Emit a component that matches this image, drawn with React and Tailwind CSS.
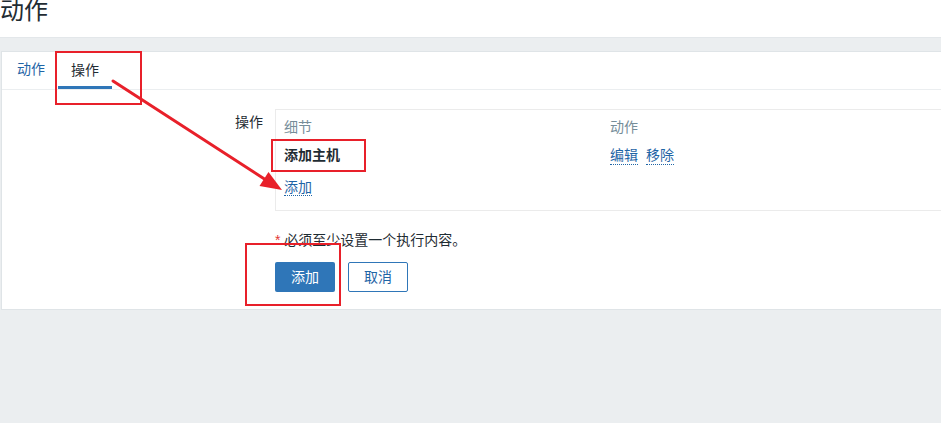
export default function App() {
  const font = { fontFamily: 'Arial, "Noto Sans CJK SC", sans-serif' };
  return (
    <div className="relative h-[423px] w-[941px] overflow-hidden bg-[#ebeef0] text-[14px] text-[#1f2c33]" style={font}>
      <header className="flex h-[38px] items-start bg-white border-b border-[#e3e7ea]">
        <h1 className="-mt-[4px] text-[24px] leading-[30px] font-normal text-[#1f2c33]">动作</h1>
      </header>

      <section className="mt-[13px] ml-[1px] h-[259px] border border-r-0 border-[#dfe4e7] bg-white">
        <nav className="flex h-[38px] border-b border-[#ebeef0] pl-[2px]">
          <a className="flex items-center px-[13px] border-b-[3px] border-transparent text-[#1f65a6]">动作</a>
          <a className="flex items-center px-[13px] border-b-[3px] border-[#2f76b8] pt-[3px] text-[#1f2c33]">操作</a>
        </nav>

        <div className="grid grid-cols-[258px_1fr] gap-x-[12px] pt-[19px] pl-[3px]">
          <div className="pt-[4px] text-right leading-[18px]">操作</div>
          <div className="h-[102px] border border-r-0 border-[#ebebeb] px-[8px] pt-[8px]">
            <div className="grid grid-cols-[326px_1fr] leading-[18px]">
              <span className="text-[#768d99]">细节</span>
              <span className="text-[#768d99]">动作</span>
            </div>
            <div className="mt-[10px] grid grid-cols-[326px_1fr] leading-[18px]">
              <span className="font-bold">添加主机</span>
              <span className="flex gap-[8px]">
                <a className="border-b border-dotted border-[#1f65a6] text-[#1f65a6]">编辑</a>
                <a className="border-b border-dotted border-[#1f65a6] text-[#1f65a6]">移除</a>
              </span>
            </div>
            <div className="mt-[13px] leading-[18px]">
              <a className="border-b border-dotted border-[#1f65a6] text-[#1f65a6]">添加</a>
            </div>
          </div>

          <div />
          <div className="mt-[20px] leading-[18px]">
            <span className="text-[#e33734]">*</span> 必须至少设置一个执行内容。
          </div>

          <div />
          <div className="mt-[13px] flex gap-[13px]">
            <button className="h-[30px] w-[60px] rounded-[2px] bg-[#2f76b8] text-white">添加</button>
            <button className="h-[30px] w-[60px] rounded-[2px] border border-[#2f76b8] bg-white text-[#1f65a6]">取消</button>
          </div>
        </div>
      </section>

      {/* annotations */}
      <div className="absolute left-[55px] top-[51px] h-[54px] w-[87px] border-2 border-[#e8202a]" />
      <div className="absolute left-[271px] top-[139px] h-[33px] w-[95px] border-2 border-[#e8202a]" />
      <div className="absolute left-[245px] top-[243px] h-[63px] w-[96px] border-2 border-[#e8202a]" />
      <svg className="absolute left-0 top-0" width="941" height="423">
        <line x1="113" y1="81" x2="266" y2="180" stroke="#e8202a" strokeWidth="3" strokeLinecap="round" />
        <polygon points="282,190 268.5,172 259.5,186" fill="#e8202a" />
      </svg>
    </div>
  );
}
